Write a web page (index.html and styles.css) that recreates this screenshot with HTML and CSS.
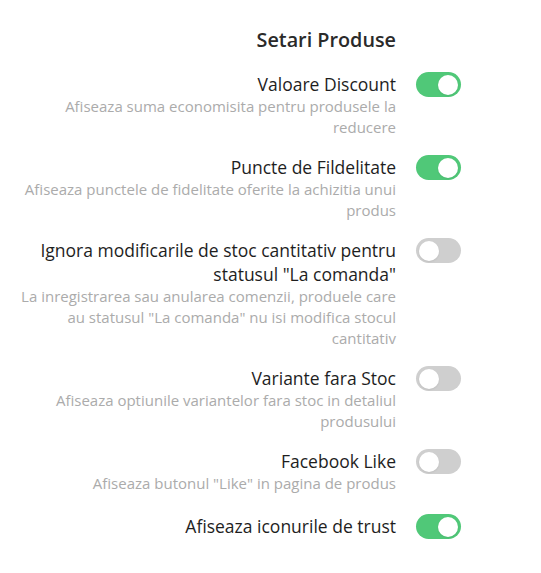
FILE: index.html
```html
<!DOCTYPE html>
<html lang="ro">
<head>
<meta charset="utf-8">
<link rel="stylesheet" href="styles.css">
</head>
<body>
<div class="panel">
  <h2 class="title">Setari Produse</h2>
  <div class="row">
    <div class="text">
      <div class="label">Valoare Discount</div>
      <div class="desc">Afiseaza suma economisita pentru produsele la reducere</div>
    </div>
    <span class="toggle on"><span class="knob"></span></span>
  </div>
  <div class="row">
    <div class="text">
      <div class="label">Puncte de Fildelitate</div>
      <div class="desc">Afiseaza punctele de fidelitate oferite la achizitia unui produs</div>
    </div>
    <span class="toggle on"><span class="knob"></span></span>
  </div>
  <div class="row">
    <div class="text">
      <div class="label">Ignora modificarile de stoc cantitativ pentru statusul "La comanda"</div>
      <div class="desc">La inregistrarea sau anularea comenzii, produele care au statusul "La comanda" nu isi modifica stocul cantitativ</div>
    </div>
    <span class="toggle"><span class="knob"></span></span>
  </div>
  <div class="row">
    <div class="text">
      <div class="label">Variante fara Stoc</div>
      <div class="desc">Afiseaza optiunile variantelor fara stoc in detaliul produsului</div>
    </div>
    <span class="toggle"><span class="knob"></span></span>
  </div>
  <div class="row">
    <div class="text">
      <div class="label">Facebook Like</div>
      <div class="desc">Afiseaza butonul "Like" in pagina de produs</div>
    </div>
    <span class="toggle"><span class="knob"></span></span>
  </div>
  <div class="row row-last">
    <div class="text">
      <div class="label">Afiseaza iconurile de trust</div>
    </div>
    <span class="toggle on"><span class="knob"></span></span>
  </div>
</div>
</body>
</html>
```
FILE: styles.css
```css
html, body {
  margin: 0;
  padding: 0;
  background: #ffffff;
}
body {
  font-family: "Open Sans", "Noto Sans", sans-serif;
  color: #222;
}
.panel {
  width: 443px;
  margin-left: 18px;
  padding-top: 26px;
  display: flex;
  flex-direction: column;
  gap: 17px;
}
.title {
  margin: 0 65px 1px 0;
  font-size: 19.8px;
  line-height: 28px;
  font-weight: 600;
  text-align: right;
  color: #2a2a2a;
}
.row {
  display: grid;
  grid-template-columns: 1fr 45px;
  column-gap: 20px;
  align-items: start;
}
.row-last {
  margin-top: 3px;
}
.text {
  text-align: right;
}
.label {
  font-size: 17.5px;
  line-height: 24px;
  color: #1e1e1e;
}
.desc {
  font-size: 15px;
  line-height: 21px;
  color: #ababab;
}
.toggle {
  position: relative;
  display: block;
  width: 45px;
  height: 25px;
  border-radius: 13px;
  background: #cfcfcf;
}
.toggle.on {
  background: #50c878;
}
.knob {
  position: absolute;
  top: 2.5px;
  left: 3px;
  width: 20px;
  height: 20px;
  border-radius: 50%;
  background: #fff;
  box-shadow: 0 1px 2px rgba(0,0,0,0.08);
}
.toggle.on .knob {
  left: 22px;
}
```
